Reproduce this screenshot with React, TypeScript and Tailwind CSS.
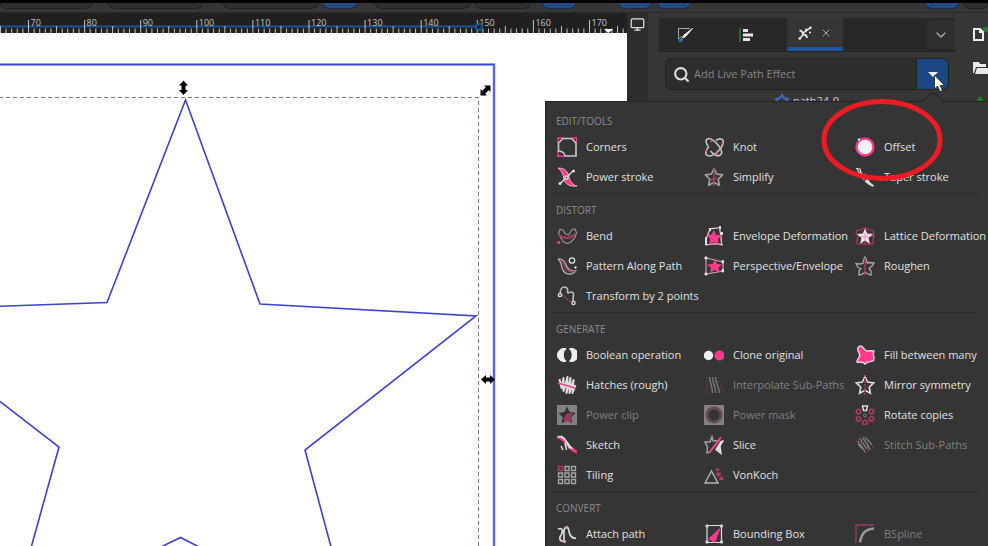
import * as React from 'react'
import { ChevronDown, Monitor, Search, X } from 'lucide-react'

const PINK = '#ff3a8c'
const DIM_PINK = '#b03a68'
const LIGHT = '#dedede'
const STAR = 'M10 1.5 12.6 7l6 .9-4.4 4.3 1.2 6.1L10 15.4l-5.4 2.9 1.2-6.1L1.4 7.9l6-.9z'

interface Effect {
  name: string
  icon: React.ReactNode
  disabled?: boolean
}

interface Section {
  title: string
  effects: Effect[]
}

function Icon({ children }: { children: React.ReactNode }) {
  return (
    <svg width="20" height="20" viewBox="0 0 20 20" fill="none" stroke={LIGHT} strokeWidth="1.4" className="shrink-0">
      {children}
    </svg>
  )
}

const sections: Section[] = [
  {
    title: 'Edit/Tools',
    effects: [
      {
        name: 'Corners',
        icon: (
          <Icon>
            <path d="M1 6V1h5M15 1h4.500v5M1 13v6.300h7" stroke={PINK} strokeWidth="1.4" />
            <path d="M6 1.500h8.500L19 6v13H8Q7.500 14.500 1.500 14V6z" stroke="#c9c9c9" strokeWidth="1.600" />
          </Icon>
        ),
      },
      {
        name: 'Knot',
        icon: (
          <Icon>
            <path d="M4 9C1 5 1.500 1.500 5 1.500c3 0 6 3 9 6.500 3 3.500 5 8 2.500 10-3 2-7-.5-10-4" stroke="#c4c4c4" strokeWidth="1.600" />
            <path d="M12 3.500c3.500-2.500 7-2 7.200 1 .2 3-2.200 7-6 10.500-4 3.500-8 5-10.500 3.200-2-2 0-6 2.300-9" stroke="#c4c4c4" strokeWidth="1.600" />
            <path d="M8 5 6.500 3.500M17.500 8l1.300-2.500M2.200 15l1.300-3M12 16l2 1.500" stroke={PINK} strokeWidth="1.600" />
          </Icon>
        ),
      },
      {
        name: 'Offset',
        icon: (
          <Icon>
            <circle cx="10" cy="10" r="8.500" fill="#f2f2f2" stroke={PINK} strokeWidth="2.400" />
            <circle cx="4" cy="2.500" r="1.200" fill={LIGHT} stroke="none" />
          </Icon>
        ),
      },
      {
        name: 'Power stroke',
        icon: (
          <Icon>
            <path d="M1 1c6 0 10 3 11 9 1 5 4 8 8 9-7 1-12-2-13-7C6 7 5 4 1 1z" fill={PINK} stroke="#e8b7c9" strokeWidth="1" />
            <path d="m3 16.500 5-4.500M11 9l5-5" />
            <circle cx="16.500" cy="4" r="1.500" fill={LIGHT} stroke="none" />
            <circle cx="3" cy="16.500" r="1.500" fill={LIGHT} stroke="none" />
            <circle cx="9.500" cy="10.500" r="1.500" fill="#353535" />
          </Icon>
        ),
      },
      {
        name: 'Simplify',
        icon: (
          <Icon>
            <path d={STAR} stroke="#a5a5a5" strokeWidth="1.600" strokeLinejoin="round" />
            <path d="M10 1v18M7 13l6-2" stroke={DIM_PINK} />
          </Icon>
        ),
      },
      {
        name: 'Taper stroke',
        icon: (
          <Icon>
            <path d="M1 1.500 5 2l1 3.500M2 2.500c3 2 4 12 17 16.500" strokeWidth="1.200" />
            <path d="M6 6c2 6 6 11 12 13-3-3-7-6-9-12z" fill={LIGHT} />
            <path d="m5 10 4-4M8 15l4-4" stroke="#353535" />
          </Icon>
        ),
      },
    ],
  },
  {
    title: 'Distort',
    effects: [
      {
        name: 'Bend',
        icon: (
          <Icon>
            <path d="M1.500 7 3 3.500 6 4l2 3.500L11.500 9 15 3.500l3-.500 1.500 3.500-1.500 5-4 4.500-4 1.500-4-2-2-3.500z" stroke="#929292" strokeWidth="1.200" />
            <path d="M2 9c5 4 11 4 16-1" stroke={DIM_PINK} strokeWidth="2.200" />
            <circle cx="1.800" cy="16.500" r="1.500" fill={PINK} stroke="none" />
          </Icon>
        ),
      },
      {
        name: 'Envelope Deformation',
        icon: (
          <Icon>
            <path d="M6 3c3-1 7 0 10-2-1 6 2 8 1 13l1 5c-5-2-11-1-16 0C0 14 4 9 6 3z" strokeWidth="1.200" />
            <path d="m10 4 2 5 6 0-4 4 1 6-5-3-5 3 1-6-3-4 5-1z" fill={PINK} stroke="none" />
            <path d="M2 11v8M6 2v3M16 0v3M18 6v3" strokeWidth="2" />
          </Icon>
        ),
      },
      {
        name: 'Lattice Deformation',
        icon: (
          <Icon>
            <path d="M2 4h5q3-4 7 0h4l1 6-1 3v5H2v-5l2-4-3-2zM10 1v18M2 10h17" stroke={DIM_PINK} strokeWidth="1.200" />
            <path d="m10 2.500 2.200 5 6 .5-4.700 4 1.500 6-5-3.500L5 18l1.500-6L1.800 8l6-.5z" fill="#f7e3eb" stroke="none" />
            <path d="M10 7v8M6 11h8" stroke="#ef8fb5" strokeWidth="1" />
          </Icon>
        ),
      },
      {
        name: 'Pattern Along Path',
        icon: (
          <Icon>
            <path d="M1 3c6 0 7 3 8 6s4 6 9.500 6c-3 4-9 4-12 0S5 5 1 3z" stroke="#aaa" />
            <path d="M3 4c4 1 4 10 9 11 3 1 4 1 6 0" stroke={DIM_PINK} />
            <circle cx="15" cy="4.500" r="2.700" strokeWidth="1.300" />
            <circle cx="18.500" cy="11.500" r="1.200" fill={LIGHT} stroke="none" />
          </Icon>
        ),
      },
      {
        name: 'Perspective/Envelope',
        icon: (
          <Icon>
            <path d="m2 2 17 4v9L2 18z" stroke="#d49bb0" strokeWidth="1.200" />
            <path d="m11 4 2 4 5 .500-3.500 3 1 5-4.500-2.500-5 2.500 1-5-4-3 5.500-.500z" fill={PINK} stroke="none" />
            <path d="M1 1h2v2H1zM18 4.500h1.500V7H18zM1 17h2v2H1zM18 13.500h1.500V16H18z" fill={LIGHT} stroke={LIGHT} strokeWidth="1" />
          </Icon>
        ),
      },
      {
        name: 'Roughen',
        icon: (
          <Icon>
            <path d="m10 1 1.500 3 .5 3 3-.500 4 .500-2 3-3 2.500 2 2.500 0 4-3-1-3-2-3 2.500-3 .5 0-4 2-2.500-3-1-2-4 4 .500 3-.500.500-3z" stroke="#aaa" strokeWidth="1.300" />
            <path d="M10 2v17" stroke={DIM_PINK} />
          </Icon>
        ),
      },
      {
        name: 'Transform by 2 points',
        icon: (
          <Icon>
            <path d="M3.500 8C2-1 12-1 10.500 6c0 3 5-3 6 2 .500 3-1.500 4 0 7" stroke="#bcbcbc" strokeWidth="1.600" />
            <path d="m5 9 9 7" stroke={DIM_PINK} strokeDasharray="2 1" />
            <circle cx="3" cy="9" r="1.600" />
            <circle cx="16.500" cy="17" r="1.600" />
          </Icon>
        ),
      },
    ],
  },
  {
    title: 'Generate',
    effects: [
      {
        name: 'Boolean operation',
        icon: (
          <Icon>
            <path d="M9 3.700A6.600 6.600 0 1 0 9 16.300 8.500 8.500 0 0 1 9 3.700z" fill="#f0f0f0" stroke="#f0f0f0" strokeWidth="1" />
            <path d="M12.500 3.700A6.600 6.600 0 1 1 12.500 16.300 8.500 8.500 0 0 0 12.500 3.700z" fill="#f0f0f0" stroke="#f0f0f0" strokeWidth="1" />
          </Icon>
        ),
      },
      {
        name: 'Clone original',
        icon: (
          <Icon>
            <circle cx="4.500" cy="10.500" r="4.700" fill="#f0f0f0" stroke="none" />
            <circle cx="15.500" cy="10.500" r="5" fill={PINK} stroke="none" />
          </Icon>
        ),
      },
      {
        name: 'Fill between many',
        icon: (
          <Icon>
            <path d="M4 1.500C9-1 8 6 12 6c4 0 7-1 7 .500-2 3 1 5-.5 9-2 2-6 0-8.500 3.500-2-3-5-1-8-2 0-4 4-5 2.500-8C3.500 6 1 3.500 4 1.500z" fill={PINK} stroke="#f5cfdd" strokeWidth="1.500" />
          </Icon>
        ),
      },
      {
        name: 'Hatches (rough)',
        icon: (
          <Icon>
            <path d="m2.500 4 2 9L6.500 3l0 13 4-14-1 16 4-15-1 15 4-13-1 13 3-8" strokeWidth="2" strokeLinejoin="round" />
            <path d="m1 8 17 5" stroke={PINK} strokeWidth="1.500" />
          </Icon>
        ),
      },
      {
        name: 'Interpolate Sub-Paths',
        disabled: true,
        icon: (
          <Icon>
            <path d="M5.500 2c0 6 3 8 3 16M8.500 2c0 6 3 8 3 16M11.500 2c0 6 3 8 4 16" stroke="#777" />
            <path d="M2.500 2v16M14 2c0 6 5 8 5 16" stroke="#84395a" strokeWidth="1" strokeDasharray="1.500 2" />
          </Icon>
        ),
      },
      {
        name: 'Mirror symmetry',
        icon: (
          <Icon>
            <path d={STAR} strokeWidth="1.600" />
            <path d="M10 0v20" stroke={DIM_PINK} strokeDasharray="2 1" />
          </Icon>
        ),
      },
      {
        name: 'Power clip',
        disabled: true,
        icon: (
          <Icon>
            <path d="M0 0h20v20H0z" fill="#818181" stroke="none" />
            <path d={STAR} fill="#303030" stroke="none" />
            <path d="M7 18c-1-8 3-11 9-10l-2 4 1 6-5-2z" fill="#983760" stroke="none" />
          </Icon>
        ),
      },
      {
        name: 'Power mask',
        disabled: true,
        icon: (
          <Icon>
            <path d="M0 0h20v20H0z" fill="#818181" stroke="none" />
            <circle cx="10" cy="10" r="7" fill="#333" stroke="#684754" strokeWidth="3" />
          </Icon>
        ),
      },
      {
        name: 'Rotate copies',
        icon: (
          <Icon>
            <path d="M7.500 1h5l-1 4.500h-3z" />
            <g stroke={DIM_PINK} strokeWidth="1.600">
              <circle cx="16.500" cy="6.500" r="2.200" />
              <circle cx="16.500" cy="14" r="2.200" />
              <circle cx="10" cy="17.500" r="2.200" />
              <circle cx="3.500" cy="14" r="2.200" />
              <circle cx="3.500" cy="6.500" r="2.200" />
            </g>
            <circle cx="10" cy="10.500" r="1.500" stroke="#777" strokeWidth="1" />
          </Icon>
        ),
      },
      {
        name: 'Sketch',
        icon: (
          <Icon>
            <path d="M0 2c10 1 9 11 20 15" stroke={PINK} strokeWidth="3" />
            <path d="M1 1.500c8 0 8 7 12 12M4 1c6 3 6 9 12 13M4 11l2 4M8 8l1.500 7" strokeWidth="1.500" />
          </Icon>
        ),
      },
      {
        name: 'Slice',
        icon: (
          <Icon>
            <path d="M8 1.500 9 6l6-.500-9 11.500-3 1 .500-6-2.500-5 5 0z" stroke="#a5a5a5" />
            <path d="m19 6-3 5 1 7.500-5-4 5-8z" fill={LIGHT} />
            <path d="M17 2 5 18" stroke={PINK} strokeWidth="1.800" />
          </Icon>
        ),
      },
      {
        name: 'Stitch Sub-Paths',
        disabled: true,
        icon: (
          <Icon>
            <path d="M3 6c1 4 4 4 6 9M5.500 4c1 4 4 5 6 10M8 2.500c1 4 4 5 6 10M3 9c2 2 2 2 4 5M10 2c2 3 5 5 7 8M8 14l3 4M12 11l3 4" stroke="#888" strokeWidth="1.200" />
            <path d="M1 7 8 1M10 18l9-7" stroke="#84395a" strokeDasharray="1.500 1.500" />
          </Icon>
        ),
      },
      {
        name: 'Tiling',
        icon: (
          <Icon>
            <path d="M1.500 1.500h4v4h-4z" stroke={DIM_PINK} />
            <path d="M8 1.500h4v4H8zM14.500 1.500h4v4h-4zM1.500 8h4v4h-4zM8 8h4v4H8zM14.500 8h4v4h-4zM1.500 14.500h4v4h-4zM8 14.500h4v4H8zM14.500 14.500h4v4h-4z" stroke="#a5a5a5" />
          </Icon>
        ),
      },
      {
        name: 'VonKoch',
        icon: (
          <Icon>
            <path d="m7.500 6 6.500 12H1z" stroke="#b5b5b5" />
            <path d="m13.500 3 1.500 2.500h-3zM12 8h5l-2.500 4zM17.500 11l2 3.500h-4z" fill={DIM_PINK} stroke={DIM_PINK} strokeWidth="1" />
          </Icon>
        ),
      },
    ],
  },
  {
    title: 'Convert',
    effects: [
      {
        name: 'Attach path',
        icon: (
          <Icon>
            <path d="M1 5c7-2 4 5 2 8-1 4 4 6 4 2 0-5-1-12 3-12 3 0 0 11 9 11.500" strokeWidth="1.700" />
            <circle cx="7.500" cy="17.500" r="1.700" fill="#e796b3" stroke="none" />
            <circle cx="10" cy="3.500" r="1.500" fill="#e796b3" stroke="none" />
          </Icon>
        ),
      },
      {
        name: 'Bounding Box',
        icon: (
          <Icon>
            <path d="M3 1.500h14.500v17H3z" strokeWidth="1.200" />
            <path d="M17 3 4 15l7 4z" fill={PINK} stroke="none" />
            <path d="M2 1h2v2H2zM16.500 1h2v2h-2zM2 17h2v2H2zM16.500 17h2v2h-2z" fill="#aaa" strokeWidth="1" />
          </Icon>
        ),
      },
      {
        name: 'BSpline',
        disabled: true,
        icon: (
          <Icon>
            <path d="M1 19V1h18" stroke="#963a61" />
            <path d="M5 18.500C6 11 9 5 19 4.500" stroke="#999" strokeWidth="2.500" />
          </Icon>
        ),
      },
    ],
  },
]

function EffectButton({ name, icon, disabled }: Effect) {
  return (
    <button
      disabled={disabled}
      className="flex h-[30px] items-center gap-[9px] text-left whitespace-nowrap text-[#e0e0e0] hover:text-white disabled:text-[#808080]"
    >
      {icon}
      {name}
    </button>
  )
}

function EffectsPopover() {
  return (
    <div className="absolute top-[101px] right-0 bottom-0 w-[443px] border-t border-l border-[#222] bg-[#353535]">
      <svg width="22" height="11" viewBox="0 0 22 11" className="absolute right-11 -top-[10px]">
        <path d="M0 9.500 10 1h2l10 8.500V11H0z" fill="#353535" />
        <path d="M0 9.500 10 1h2l10 8.500" fill="none" stroke="#222" />
      </svg>
      <div className="h-full overflow-hidden">
        {sections.map((section) => (
          <section key={section.title} className="group px-[11px] pt-px first:pt-[2px]">
            <h2 className="-mx-1 h-7 border-t border-[#2d2d2d] px-[3px] pt-2 text-[10px] leading-4 font-medium text-[#8c8c8c] uppercase group-first:border-transparent">
              {section.title}
            </h2>
            <div className="grid grid-cols-[147px_151px_1fr]">
              {section.effects.map((effect) => (
                <EffectButton key={effect.name} {...effect} />
              ))}
            </div>
          </section>
        ))}
      </div>
    </div>
  )
}

function Toolbar() {
  const field = 'h-[6px] rounded-b-md border border-t-0 border-[#222] bg-[#303030]'
  const toggle = 'h-[6px] w-[34px] rounded-b-md border border-t-0 border-[#1b2c48] bg-[#234a83]'
  return (
    <div className="flex h-[10px] shrink-0 items-start border-b border-[#2a2a2a] bg-[#363636]">
      <div className={`${field} w-[92px]`} />
      <div className={`${field} ml-4 w-[95px]`} />
      <div className={`${field} ml-5 w-[95px]`} />
      <div className={`${toggle} ml-[5px]`} />
      <div className={`${field} ml-[18px] w-[95px]`} />
      <div className={`${field} ml-[5px] w-14`} />
      <div className={`${toggle} ml-[11px]`} />
      <div className={`${toggle} ml-[42px]`} />
      <div className={`${toggle} ml-[5px]`} />
      <div className={`${toggle} ml-auto`} />
      <div className={`${field} ml-[5px] w-6`} />
    </div>
  )
}

function Ruler() {
  const origin = 28.5
  const step = 56.1
  const labels = [70, 80, 90, 100, 110, 120, 130, 140, 150, 160, 170]
  const minors = Array.from({ length: 400 }, (_, i) => i - 5)
  return (
    <svg className="h-5 w-full shrink-0 bg-[#202020]">
      <path d="M0 13.500h479" stroke="#1d5299" strokeWidth="2" />
      <g stroke="#c4c4c4">
        {minors.map((n) => {
          const x = origin + (n * step) / 10
          const top = n % 10 === 0 ? 7 : n % 5 === 0 ? 13 : 15.5
          return <path key={n} d={`M${x} ${top}V20`} />
        })}
      </g>
      <g fill="#c4c4c4" fontSize="9">
        {labels.map((value, i) => (
          <text key={value} x={origin + i * step + 2} y="13">
            {value}
          </text>
        ))}
      </g>
      <circle cx="479" cy="14" r="3" fill="#202020" stroke="#1d5299" strokeWidth="2" />
      <path d="M604 16h9l-4.500 4z" fill="#fff" />
    </svg>
  )
}

function Canvas() {
  return (
    <svg className="min-h-0 w-full flex-1 bg-white" fill="none">
      <g transform="translate(0 -33)">
        <path d="M-5 64.500H494V1200" stroke="#b9bdf2" strokeWidth="3" />
        <path d="M-5 64.500H494V1200" stroke="#3c44d8" strokeWidth="1.500" />
        <path d="M-1 97.500H478.500V1200" stroke="#7a7aa8" strokeDasharray="4 3" />
        <path
          d="M-110 310 107 302.500 185.500 100 260 304 476 316 305 450 352 625 180.500 537.500 11 620 59 447-110 317"
          stroke="#3b43cc"
          strokeWidth="1.600"
        />
        <g fill="#000">
          <path d="m183.500 80.500 4.500 5h-2.500v4.500h2.500l-4.500 5-4.500-5h2.500v-4.500H179z" />
          <path d="M481 379.500l5-4.500v2.500h4V375l5 4.500-5 4.500v-2.500h-4v2.500z" />
          <path d="M490.500 85.500v6.500l-1.800-1.800-3.500 3.500 1.800 1.800h-6.500V89l1.800 1.800 3.500-3.500L484 85.500z" />
        </g>
      </g>
    </svg>
  )
}

function DialogTabs() {
  return (
    <div className="flex h-[34px] border-b border-[#222] bg-[#282828]">
      <button aria-label="Fill and Stroke" className="flex w-[52px] items-center justify-center">
        <svg width="16" height="16" viewBox="0 0 16 16" fill="none" stroke="#a8a8a8">
          <path d="M13 1.500H1.500V12L5 9" />
          <path d="M15.500 1.500 7 8l-1.500 3L8.500 9.500z" fill="#eee" stroke="#eee" />
          <path d="M2 14.500c1-3 2-3.500 3.500-2.500 0 2-1 2.500-3.500 2.500z" fill="#3572c4" stroke="#3572c4" />
        </svg>
      </button>
      <button aria-label="Align and Distribute" className="ml-2 flex w-[54px] items-center justify-center">
        <svg width="14" height="14" viewBox="0 0 14 14">
          <path d="M0 0h2v14H0z" fill="#27672f" />
          <path d="M4 1h5v3H4zM4 5.500h10v3H4zM4 10h7v3H4z" fill="#e8e8e8" />
        </svg>
      </button>
      <div className="ml-[14px] flex w-14 items-center justify-center gap-2 border-b-4 border-[#1f539b] bg-[#353535]">
        <button aria-label="Path Effects">
          <svg width="14" height="14" viewBox="0 0 14 14" fill="none" stroke="#e4e4e4">
            <path d="M1 13 4.500 9.500 5 7l7-5" strokeWidth="1.600" />
            <path d="M1.500 4.500c2 0 3 1 3.500 4 2 0 4 1 4 3.500" strokeWidth="1.800" />
            <path d="M7 3.500h2M11 6.500h2" strokeWidth="1.600" />
            <circle cx="12.500" cy="1.800" r="1.300" fill="#e4e4e4" stroke="none" />
            <circle cx="1.800" cy="12.500" r="1.300" fill="#e4e4e4" stroke="none" />
          </svg>
        </button>
        <button aria-label="Close tab">
          <X size={12} color="#aaa" />
        </button>
      </div>
      <button aria-label="Dialog menu" className="mt-[2px] ml-auto flex h-[29px] w-[28px] items-center justify-center rounded bg-[#2f2f2f]">
        <ChevronDown size={16} color="#aaa" />
      </button>
    </div>
  )
}

function DialogPanel() {
  return (
    <aside className="mt-[5px] w-[296px] shrink-0">
      <DialogTabs />
      <div className="mx-[6px] mt-[6px] flex h-8 rounded-md border border-[#222] bg-[#2d2d2d]">
        <label htmlFor="effect-search" className="flex w-6 items-center justify-end">
          <Search size={17} color="#ddd" strokeWidth={3} aria-label="Search" />
        </label>
        <input
          id="effect-search"
          placeholder="Add Live Path Effect"
          className="min-w-0 flex-1 bg-transparent pb-px pl-1 outline-none placeholder:text-[#868686]"
        />
        <button aria-label="Show effects" className="flex w-8 items-center justify-center rounded-r-md border-l border-[#222] bg-[#1c4785]">
          <svg width="10" height="5" viewBox="0 0 10 5">
            <path d="M0 0h10L5 5z" fill="#eee" />
          </svg>
        </button>
      </div>
      <div className="flex items-center gap-1 pt-[3px] pl-[116px] text-[#ccc]">
        <svg width="14" height="16" viewBox="0 0 14 16">
          <path d="m7 2 2 3 4 1-3 3 1 4-4-2-4 2 1-4-3-3 4-1z" fill="none" stroke="#4468c8" strokeWidth="2" />
        </svg>
        path24-0
      </div>
    </aside>
  )
}

function CommandBar() {
  return (
    <div className="flex w-[33px] shrink-0 flex-col items-end overflow-hidden pt-[14px]">
      <button aria-label="New document">
        <svg width="15" height="14" viewBox="0 0 15 14" fill="none">
          <path d="M1 2h6l3 3v8H1zM7 2v3h3" stroke="#eee" strokeWidth="2" />
          <circle cx="13" cy="2" r="3" fill="#217a2c" />
        </svg>
      </button>
      <button aria-label="Open document" className="mt-5">
        <svg width="15" height="14" viewBox="0 0 15 14">
          <path d="M0 1h6l1 2h6v3H3l-2 6H0z" fill="#e8e8e8" />
          <path d="M4 7h11v6H2z" fill="#e8e8e8" />
        </svg>
      </button>
      <button aria-label="Import" className="mt-[19px] mr-[2px]">
        <svg width="12" height="14" viewBox="0 0 12 14">
          <path d="m6 1 4 7H8v5H4V8H2z" fill="#217a2c" />
        </svg>
      </button>
    </div>
  )
}

export default function App() {
  return (
    <div className="relative flex h-screen flex-col overflow-hidden border-t-3 border-black bg-[#363636] font-['Open_Sans','Noto_Sans',sans-serif] text-[11px] leading-4">
      <Toolbar />
      <main className="flex min-h-0 flex-1">
        <div className="flex min-w-0 flex-1 flex-col">
          <Ruler />
          <Canvas />
        </div>
        <div className="flex w-[21px] shrink-0 justify-center bg-[#2d2d2d] pt-[3px]">
          <button aria-label="Display mode" className="h-4">
            <Monitor size={15} color="#ddd" />
          </button>
        </div>
        <div className="w-[11px] shrink-0" />
        <DialogPanel />
        <CommandBar />
      </main>
      <div className="pointer-events-none absolute inset-0 -top-[3px]">
        <div className="pointer-events-auto">
          <EffectsPopover />
        </div>
        {/* Highlight ring around the Offset effect */}
        <svg width="122" height="84" viewBox="0 0 122 84" className="absolute top-[98px] right-[45px]">
          <ellipse cx="61" cy="42" rx="58" ry="38.500" fill="none" stroke="#ed1c24" strokeWidth="5" />
        </svg>
        {/* Mouse pointer */}
        <svg width="13" height="20" viewBox="0 0 13 20" className="absolute top-[74px] right-[42px]">
          <path d="M1.500 1v14l3-3 2.500 5.500 2.500-1L7 11.500h4.500z" fill="#fff" stroke="#222" strokeWidth="0.800" />
        </svg>
      </div>
    </div>
  )
}
